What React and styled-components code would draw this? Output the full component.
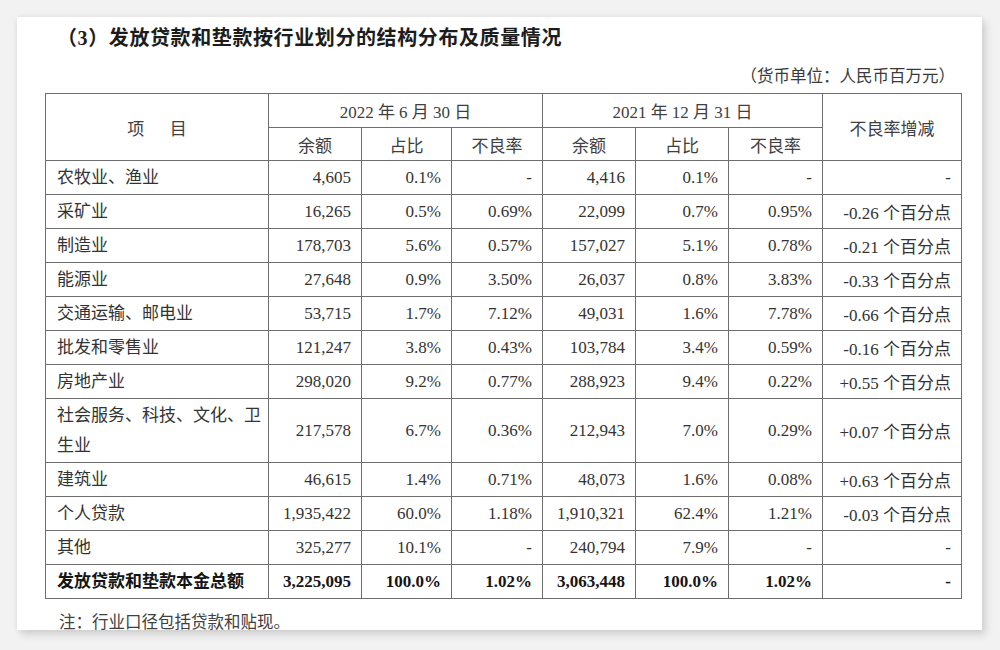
import React from 'react'
import styled, { createGlobalStyle } from 'styled-components'

const GlobalStyle = createGlobalStyle`
  html, body {
    margin: 0;
    padding: 0;
    background: #f2f2f2;
  }
  body {
    font-family: "Liberation Serif", "Noto Sans CJK SC", serif;
  }
`;

const rows = [
    { name: '农牧业、渔业', a: '4,605', b: '0.1%', c: '-', d: '4,416', e: '0.1%', f: '-', g: '-' },
    { name: '采矿业', a: '16,265', b: '0.5%', c: '0.69%', d: '22,099', e: '0.7%', f: '0.95%', g: '-0.26 个百分点' },
    { name: '制造业', a: '178,703', b: '5.6%', c: '0.57%', d: '157,027', e: '5.1%', f: '0.78%', g: '-0.21 个百分点' },
    { name: '能源业', a: '27,648', b: '0.9%', c: '3.50%', d: '26,037', e: '0.8%', f: '3.83%', g: '-0.33 个百分点' },
    { name: '交通运输、邮电业', a: '53,715', b: '1.7%', c: '7.12%', d: '49,031', e: '1.6%', f: '7.78%', g: '-0.66 个百分点' },
    { name: '批发和零售业', a: '121,247', b: '3.8%', c: '0.43%', d: '103,784', e: '3.4%', f: '0.59%', g: '-0.16 个百分点' },
    { name: '房地产业', a: '298,020', b: '9.2%', c: '0.77%', d: '288,923', e: '9.4%', f: '0.22%', g: '+0.55 个百分点' },
    { name: '社会服务、科技、文化、卫生业', a: '217,578', b: '6.7%', c: '0.36%', d: '212,943', e: '7.0%', f: '0.29%', g: '+0.07 个百分点', tall: true },
    { name: '建筑业', a: '46,615', b: '1.4%', c: '0.71%', d: '48,073', e: '1.6%', f: '0.08%', g: '+0.63 个百分点' },
    { name: '个人贷款', a: '1,935,422', b: '60.0%', c: '1.18%', d: '1,910,321', e: '62.4%', f: '1.21%', g: '-0.03 个百分点' },
    { name: '其他', a: '325,277', b: '10.1%', c: '-', d: '240,794', e: '7.9%', f: '-', g: '-' },
];

const total = { name: '发放贷款和垫款本金总额', a: '3,225,095', b: '100.0%', c: '1.02%', d: '3,063,448', e: '100.0%', f: '1.02%', g: '-' };

function App() {
    return (
        <>
            <GlobalStyle />
            <Page>
                <Card>
                    <Title>（3）发放贷款和垫款按行业划分的结构分布及质量情况</Title>
                    <Unit>（货币单位：人民币百万元）</Unit>
                    <Table>
                        <colgroup>
                            <col style={{ width: 223 }} />
                            <col style={{ width: 93 }} />
                            <col style={{ width: 90 }} />
                            <col style={{ width: 91 }} />
                            <col style={{ width: 93 }} />
                            <col style={{ width: 93 }} />
                            <col style={{ width: 94 }} />
                            <col style={{ width: 139 }} />
                        </colgroup>
                        <thead>
                            <HeadRow $h={34}>
                                <Th rowSpan={2}>项{'\u3000\u2002'}目</Th>
                                <Th colSpan={3}>2022 年 6 月 30 日</Th>
                                <Th colSpan={3}>2021 年 12 月 31 日</Th>
                                <Th rowSpan={2}>不良率增减</Th>
                            </HeadRow>
                            <HeadRow $h={33}>
                                <Th>余额</Th>
                                <Th>占比</Th>
                                <Th>不良率</Th>
                                <Th>余额</Th>
                                <Th>占比</Th>
                                <Th>不良率</Th>
                            </HeadRow>
                        </thead>
                        <tbody>
                            {rows.map((r) => (
                                <BodyRow key={r.name} $h={r.tall ? 64 : 34}>
                                    <NameCell $tall={r.tall}>{r.name}</NameCell>
                                    <Num>{r.a}</Num>
                                    <Num>{r.b}</Num>
                                    <Num>{r.c}</Num>
                                    <Num>{r.d}</Num>
                                    <Num>{r.e}</Num>
                                    <Num>{r.f}</Num>
                                    <Num>{r.g}</Num>
                                </BodyRow>
                            ))}
                            <BodyRow $h={34} $bold>
                                <NameCell>{total.name}</NameCell>
                                <Num>{total.a}</Num>
                                <Num>{total.b}</Num>
                                <Num>{total.c}</Num>
                                <Num>{total.d}</Num>
                                <Num>{total.e}</Num>
                                <Num>{total.f}</Num>
                                <Num>{total.g}</Num>
                            </BodyRow>
                        </tbody>
                    </Table>
                    <Note>注：行业口径包括贷款和贴现。</Note>
                </Card>
            </Page>
        </>
    )
}

const Page = styled.div`
    padding: 17px 0 0 17px;
    height: 650px;
    box-sizing: border-box;
`;

const Card = styled.div`
    width: 965px;
    height: 613px;
    box-sizing: border-box;
    background: #fff;
    padding: 7px 21px 0 28px;
    box-shadow: 0 0 6px rgba(0, 0, 0, 0.08), 4px 5px 8px rgba(0, 0, 0, 0.12);
`;

const Title = styled.h3`
    margin: 0 0 0 12px;
    font-size: 20px;
    line-height: 28px;
    font-weight: bold;
    color: #1c1c1c;
    letter-spacing: 0.6px;
`;

const Unit = styled.div`
    margin: 13px 0 0;
    width: 916px;
    text-align: right;
    font-size: 16.5px;
    line-height: 24px;
    color: #3a3a3a;
    padding-right: 6px;
    box-sizing: border-box;
`;

const Table = styled.table`
    margin-top: 4px;
    width: 916px;
    table-layout: fixed;
    border-collapse: collapse;
    border: 1px solid #6e6e6e;
    font-size: 17px;
    color: #333;
`;

const HeadRow = styled.tr`
    height: ${(p) => p.$h}px;
`;

const Th = styled.th`
    border: 1px solid #6e6e6e;
    font-weight: normal;
    text-align: center;
    padding: 0;
    color: #404040;
    white-space: nowrap;
`;

const BodyRow = styled.tr`
    height: ${(p) => p.$h}px;
    font-weight: ${(p) => (p.$bold ? 'bold' : 'normal')};
    color: ${(p) => (p.$bold ? '#151515' : '#333')};
`;

const NameCell = styled.td`
    border: 1px solid #6e6e6e;
    padding: 0 2px 0 11px;
    text-align: left;
    line-height: ${(p) => (p.$tall ? '30px' : '20px')};
    color: inherit;
`;

const Num = styled.td`
    border: 1px solid #6e6e6e;
    padding: 0 10px 0 4px;
    text-align: right;
    white-space: nowrap;
`;

const Note = styled.div`
    margin: 12px 0 0 14px;
    font-size: 16.5px;
    line-height: 24px;
    color: #404040;
`;

export default App
